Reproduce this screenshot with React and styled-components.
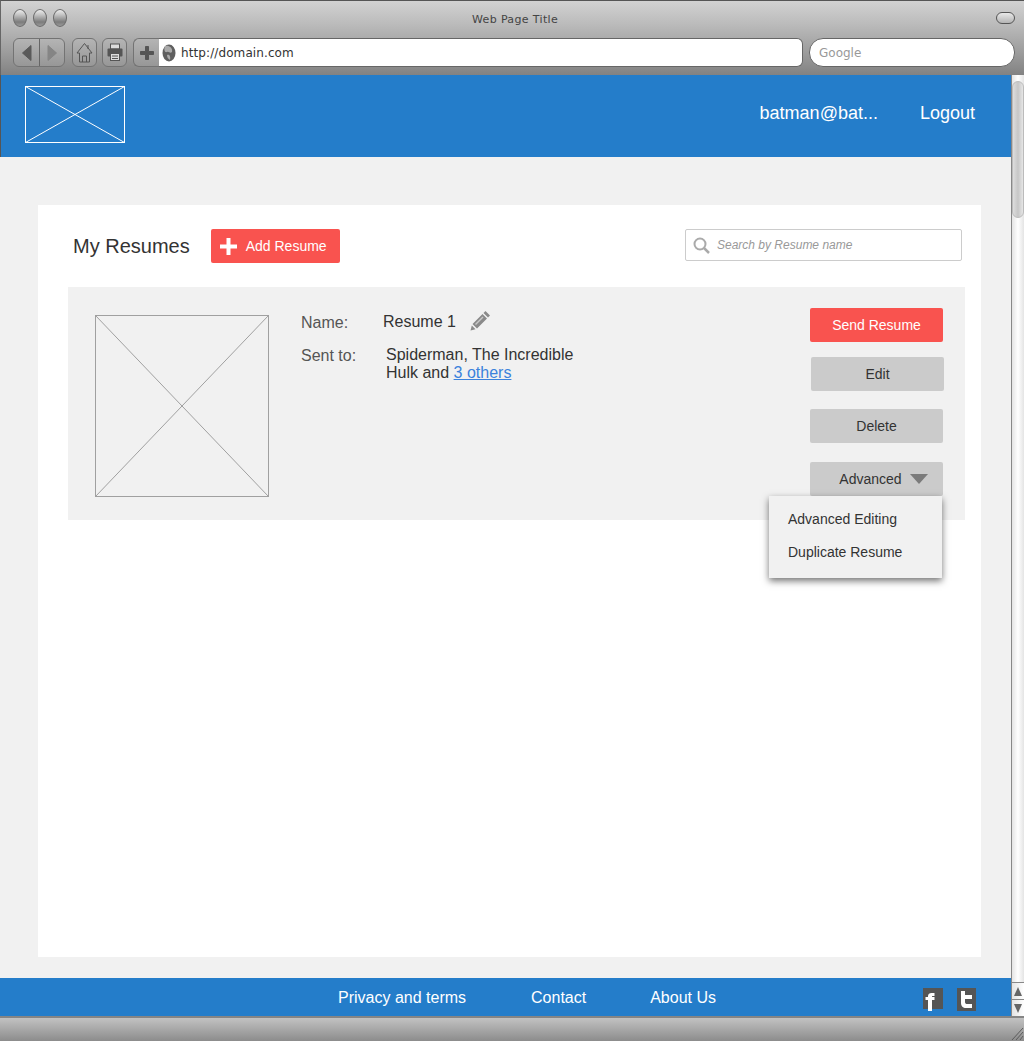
import React from 'react'
import styled, { createGlobalStyle } from 'styled-components'

const GlobalStyle = createGlobalStyle`
  html, body {
    margin: 0;
    padding: 0;
    background: #fff;
    font-family: "Liberation Sans", Arial, sans-serif;
  }
`
const Window = styled.div`
  display: flex;
  flex-direction: column;
  width: 1024px;
  height: 1041px;
  overflow: hidden;
`
const Chrome = styled.div`
  box-sizing: border-box;
  height: 75px;
  padding: 0 9px 0 12px;
  border-top: 1px solid #555;
  border-left: 1px solid #666;
  background: linear-gradient(#d2d2d2, #bcbcbc 30%, #9c9c9c 70%, #828282);
`
const TitleRow = styled.div`
  display: flex;
  align-items: center;
  height: 37px;
  padding-bottom: 3px;
  box-sizing: border-box;
`
const Lights = styled.div`
  display: flex;
  gap: 6px;
  width: 459px;
`
const Light = styled.span`
  width: 14px;
  height: 18px;
  border-radius: 50%;
  box-sizing: border-box;
  border: 1px solid #6a6a6a;
  background: linear-gradient(#ececec, #c4c4c4 30%, #7c7c7c 75%, #9a9a9a);
`
const PageTitle = styled.div`
  width: 524px;
  margin-top: 3px;
  font: 11px "DejaVu Sans", sans-serif;
  letter-spacing: 0.35px;
  color: #444;
`
const Pill = styled.span`
  width: 19px;
  height: 12px;
  border-radius: 6px;
  box-sizing: border-box;
  border: 1px solid #555;
  background: linear-gradient(#e8e8e8, #b4b4b4);
`
const Toolbar = styled.div`
  display: flex;
  align-items: flex-start;
  height: 29px;
`
const ToolGroup = styled.div`
  display: flex;
  height: 29px;
  margin-right: ${p => p.$gap}px;
  box-sizing: border-box;
  border: 1px solid #737373;
  border-radius: 6px;
  background: linear-gradient(#b4b4b4, #979797);
`
const ToolCell = styled.div`
  display: flex;
  align-items: center;
  justify-content: center;
  width: ${p => p.$w}px;
  & + & {
    border-left: 1px solid #666;
  }
`
const AddTool = styled(ToolGroup)`
  width: 26px;
  margin: 0;
  justify-content: center;
  align-items: center;
  border-right: none;
  border-radius: 6px 0 0 6px;
`
const UrlBar = styled.div`
  display: flex;
  align-items: center;
  gap: 5px;
  box-sizing: border-box;
  width: 644px;
  height: 29px;
  margin-right: 6px;
  padding-left: 3px;
  background: #fff;
  border: 1px solid #666;
  border-left: none;
  border-radius: 0 6px 6px 0;
  font: 12px "DejaVu Sans", sans-serif;
  letter-spacing: 0.1px;
  color: #333;
`
const SearchBar = styled.div`
  display: flex;
  align-items: center;
  box-sizing: border-box;
  width: 206px;
  height: 29px;
  padding-left: 9px;
  background: #fff;
  border: 1px solid #666;
  border-radius: 14px;
  font: 12px "DejaVu Sans", sans-serif;
  color: #999;
`
const Viewport = styled.div`
  display: flex;
  height: 941px;
`
const Page = styled.div`
  display: flex;
  flex-direction: column;
  width: 1011px;
`
const Header = styled.header`
  display: flex;
  align-items: flex-start;
  box-sizing: border-box;
  height: 82px;
  padding: 11px 36px 0 24px;
  background: #247dca;
  border-left: 1px solid #555;
  color: #fff;
  font-size: 18px;
`
const Logo = styled.svg`
  display: block;
  margin-right: auto;
`
const HeaderLink = styled.span`
  margin: 17px 0 0 42px;
  line-height: 20px;
`
const Main = styled.main`
  flex: 1;
  display: flex;
  padding: 48px 30px 21px 38px;
  background: #f1f1f1;
`
const Panel = styled.section`
  flex: 1;
  padding-top: 24px;
  background: #fff;
`
const TitleBar = styled.div`
  display: flex;
  align-items: flex-start;
  height: 34px;
  margin-bottom: 24px;
  padding: 0 19px 0 35px;
`
const Heading = styled.h1`
  margin: 5px 22px 0 0;
  font-size: 20px;
  line-height: 24px;
  font-weight: 400;
  color: #333;
`
const AddButton = styled.div`
  display: flex;
  align-items: center;
  gap: 9px;
  box-sizing: border-box;
  width: 129px;
  height: 34px;
  margin-left: -1px;
  padding-left: 9px;
  border-radius: 2px;
  background: #f9534f;
  color: #fff;
  font-size: 14px;
`
const Search = styled.div`
  display: flex;
  align-items: center;
  gap: 7px;
  box-sizing: border-box;
  width: 277px;
  height: 32px;
  margin-left: auto;
  padding-left: 7px;
  border: 1px solid #ccc;
  border-radius: 2px;
  color: #999;
  font-size: 12px;
  font-style: italic;
`
const Card = styled.article`
  display: flex;
  align-items: flex-start;
  margin: 0 16px 0 30px;
  padding: 28px 21px 23px 27px;
  background: #f1f1f1;
`
const Preview = styled.svg`
  display: block;
  flex: none;
`
const Details = styled.div`
  margin: -2px 0 0 32px;
  color: #333;
  font-size: 16px;
  line-height: 18px;
`
const InfoRow = styled.div`
  display: flex;
  align-items: flex-start;
  margin-top: ${p => p.$top}px;
`
const Label = styled.span`
  width: ${p => p.$w}px;
  margin-top: 1px;
  color: #555;
`
const Pencil = styled.svg`
  display: block;
  margin: -3px 0 0 14px;
`
const Others = styled.a`
  color: #3b82dc;
  text-decoration: underline;
`
const Actions = styled.div`
  position: relative;
  display: flex;
  flex-direction: column;
  align-items: flex-start;
  width: 134px;
  margin: -7px 0 0 auto;
`
const ActionButton = styled.div`
  display: flex;
  align-items: center;
  justify-content: center;
  gap: 8px;
  box-sizing: border-box;
  width: 133px;
  height: 34px;
  margin-top: ${p => p.$top || 0}px;
  margin-left: ${p => p.$shift || 0}px;
  padding-left: ${p => p.$pad || 0}px;
  border-radius: 2px;
  background: ${p => (p.$primary ? '#f9534f' : '#cbcbcb')};
  color: ${p => (p.$primary ? '#fff' : '#333')};
  font-size: 14px;
`
const Caret = styled.span`
  width: 0;
  height: 0;
  border-left: 9px solid transparent;
  border-right: 9px solid transparent;
  border-top: 10px solid #7b7b7b;
`
const Menu = styled.ul`
  position: absolute;
  top: 188px;
  right: 2px;
  box-sizing: border-box;
  width: 173px;
  height: 82px;
  margin: 0;
  padding: 7px 0 0 19px;
  list-style: none;
  background: #f1f1f1;
  box-shadow: 0 3px 7px rgba(0, 0, 0, 0.55);
  color: #333;
  font-size: 14px;
`
const MenuItem = styled.li`
  height: 33px;
  line-height: 33px;
`
const Footer = styled.footer`
  display: flex;
  align-items: center;
  box-sizing: border-box;
  height: 38px;
  padding: 2px 35px 0 338px;
  background: #247dca;
  color: #fff;
  font-size: 16px;
`
const FooterLink = styled.span`
  margin-right: ${p => p.$gap || 0}px;
`
const Socials = styled.div`
  display: flex;
  align-items: flex-start;
  gap: 13px;
  margin: 2px 0 0 auto;
`
const Scrollbar = styled.aside`
  display: flex;
  flex-direction: column;
  justify-content: space-between;
  width: 13px;
  box-sizing: border-box;
  border-left: 1px solid #888;
  background: linear-gradient(90deg, #e4e4e4, #fff 50%, #e4e4e4);
`
const Thumb = styled.div`
  box-sizing: border-box;
  height: 137px;
  margin: 6px 0 0 0;
  width: 12px;
  border: 1px solid #bbb;
  border-radius: 6px;
  background: linear-gradient(90deg, #ddd, #c6c6c6 50%, #e6e6e6);
`
const Arrows = styled.div`
  display: flex;
  flex-direction: column;
`
const Arrow = styled.div`
  display: flex;
  align-items: center;
  justify-content: center;
  height: 16px;
  border-top: 1px solid #888;
  background: linear-gradient(90deg, #e4e4e4, #fff);
  &::before {
    content: '';
    border-left: 4px solid transparent;
    border-right: 4px solid transparent;
    ${p => (p.$up ? 'border-bottom: 9px solid #666;' : 'border-top: 9px solid #666;')}
  }
`
const StatusBar = styled.div`
  display: flex;
  justify-content: flex-end;
  align-items: flex-end;
  box-sizing: border-box;
  height: 25px;
  border-top: 2px solid #858585;
  background: linear-gradient(#c2c2c2, #8c8c8c);
`

const CrossBox = ({ w, h, color, as: Comp }) => (
  <Comp width={w} height={h} viewBox={`0 0 ${w} ${h}`}>
    <rect x="0.5" y="0.5" width={w - 1} height={h - 1} fill="none" stroke={color} />
    <path d={`M0.5 0.5L${w - 0.5} ${h - 0.5}M${w - 0.5} 0.5L0.5 ${h - 0.5}`} stroke={color} fill="none" />
  </Comp>
)

const Tool = ({ d, w = 18, h = 18, fill = 'none', stroke = '#555' }) => (
  <svg width={w} height={h} viewBox={`0 0 ${w} ${h}`}>
    <path d={d} fill={fill} stroke={stroke} />
  </svg>
)

const Globe = () => (
  <svg width="14" height="18" viewBox="0 0 14 18">
    <ellipse cx="7" cy="9" rx="6.5" ry="8.5" fill="#5f5f5f" />
    <path d="M3 2C7 1 11 4 10 8 8 10 7 7 5 8 2 9 2 4 3 2ZM5 11C7 10 9 12 8 16 6 15 5 13 5 11Z" fill="#aaa" />
  </svg>
)

export default function App() {
  return (
    <Window>
      <GlobalStyle />
      <Chrome>
        <TitleRow>
          <Lights>
            <Light />
            <Light />
            <Light />
          </Lights>
          <PageTitle>Web Page Title</PageTitle>
          <Pill />
        </TitleRow>
        <Toolbar>
          <ToolGroup $gap={7}>
            <ToolCell $w={25}>
              <Tool w={12} h={18} d="M10 1.5V16.5L1.5 9Z" fill="#5a5a5a" stroke="#5a5a5a" />
            </ToolCell>
            <ToolCell $w={24}>
              <Tool w={12} h={18} d="M2 1.5V16.5L10.5 9Z" fill="#858585" stroke="#858585" />
            </ToolCell>
          </ToolGroup>
          <ToolGroup $gap={5}>
            <ToolCell $w={23}>
              <Tool w={17} h={21} d="M8.5 1.5L16 11H13.5V20H3.5V11H1ZM6.5 20V14H10.5V20M12 3V7" />
            </ToolCell>
          </ToolGroup>
          <ToolGroup $gap={6}>
            <ToolCell $w={23}>
              <svg width="16" height="19" viewBox="0 0 16 19">
                <rect x="3.5" y="1" width="9" height="5" fill="#ddd" stroke="#555" />
                <rect x="0.5" y="5.5" width="15" height="8" rx="1" fill="#555" />
                <rect x="3.5" y="10.5" width="9" height="7" fill="#ddd" stroke="#555" />
                <path d="M5 13H11M5 15.5H11" stroke="#555" />
              </svg>
            </ToolCell>
          </ToolGroup>
          <AddTool>
            <Tool w={14} h={14} d="M5.5 0.5H8.5V5.5H13.5V8.5H8.5V13.5H5.5V8.5H0.5V5.5H5.5Z" fill="#555" />
          </AddTool>
          <UrlBar>
            <Globe />
            http://domain.com
          </UrlBar>
          <SearchBar>Google</SearchBar>
        </Toolbar>
      </Chrome>
      <Viewport>
        <Page>
          <Header>
            <CrossBox as={Logo} w={100} h={57} color="#fff" />
            <HeaderLink>batman@bat...</HeaderLink>
            <HeaderLink>Logout</HeaderLink>
          </Header>
          <Main>
            <Panel>
              <TitleBar>
                <Heading>My Resumes</Heading>
                <AddButton>
                  <svg width="17" height="17" viewBox="0 0 17 17">
                    <path d="M6.5 0H10.5V6.5H17V10.5H10.5V17H6.5V10.5H0V6.5H6.5Z" fill="#fff" />
                  </svg>
                  Add Resume
                </AddButton>
                <Search>
                  <svg width="17" height="17" viewBox="0 0 17 17">
                    <circle cx="7" cy="7" r="5.5" fill="none" stroke="#aaa" strokeWidth="2" />
                    <path d="M11 11L16 16" stroke="#aaa" strokeWidth="2.5" />
                  </svg>
                  Search by Resume name
                </Search>
              </TitleBar>
              <Card>
                <CrossBox as={Preview} w={174} h={182} color="#a0a0a0" />
                <Details>
                  <InfoRow $top={0}>
                    <Label $w={82}>Name:</Label>
                    <span>Resume 1</span>
                    <Pencil width="21" height="21" viewBox="0 0 21 21">
                      <path d="M15.5 1L20 5.5 18 7.5 13.5 3ZM12.5 4L17 8.5 7 18.5 2.5 14ZM1.8 15.5L5.5 19.2 0.5 20.5Z" fill="#8a8a8a" />
                      <path d="M13 7L5.5 14.5" stroke="#c8c8c8" strokeWidth="1.5" />
                    </Pencil>
                  </InfoRow>
                  <InfoRow $top={14}>
                    <Label $w={85}>Sent to:</Label>
                    <span>
                      Spiderman, The Incredible
                      <br />
                      Hulk and <Others>3 others</Others>
                    </span>
                  </InfoRow>
                </Details>
                <Actions>
                  <ActionButton $primary>Send Resume</ActionButton>
                  <ActionButton $top={15} $shift={1}>Edit</ActionButton>
                  <ActionButton $top={18}>Delete</ActionButton>
                  <ActionButton $top={19} $pad={14}>
                    Advanced
                    <Caret />
                  </ActionButton>
                  <Menu>
                    <MenuItem>Advanced Editing</MenuItem>
                    <MenuItem>Duplicate Resume</MenuItem>
                  </Menu>
                </Actions>
              </Card>
            </Panel>
          </Main>
          <Footer>
            <FooterLink $gap={65}>Privacy and terms</FooterLink>
            <FooterLink $gap={64}>Contact</FooterLink>
            <FooterLink>About Us</FooterLink>
            <Socials>
              <svg width="22" height="23" viewBox="0 0 22 23">
                <rect x="1" width="20" height="21" fill="#555" />
                <path d="M6 23V12H3.5V9H6V8C6 6 7.5 5 9.5 5H12.5V8H10.5C10 8 10 8.5 10 9H12.5V12H10V23Z" fill="#fff" />
              </svg>
              <svg width="19" height="23" viewBox="0 0 19 23">
                <rect width="19" height="23" fill="#555" />
                <path d="M4 3H8V7H15V11H8V14C8 15.5 9 16 10 16H15V20H9C6 20 4 18 4 15Z" fill="#fff" />
              </svg>
            </Socials>
          </Footer>
        </Page>
        <Scrollbar>
          <Thumb />
          <Arrows>
            <Arrow $up />
            <Arrow />
          </Arrows>
        </Scrollbar>
      </Viewport>
      <StatusBar>
        <svg width="13" height="14" viewBox="0 0 13 14">
          <path d="M12 1L1 13M12 5L5 13M12 9L9 13" stroke="#5c5c5c" />
        </svg>
      </StatusBar>
    </Window>
  )
}
